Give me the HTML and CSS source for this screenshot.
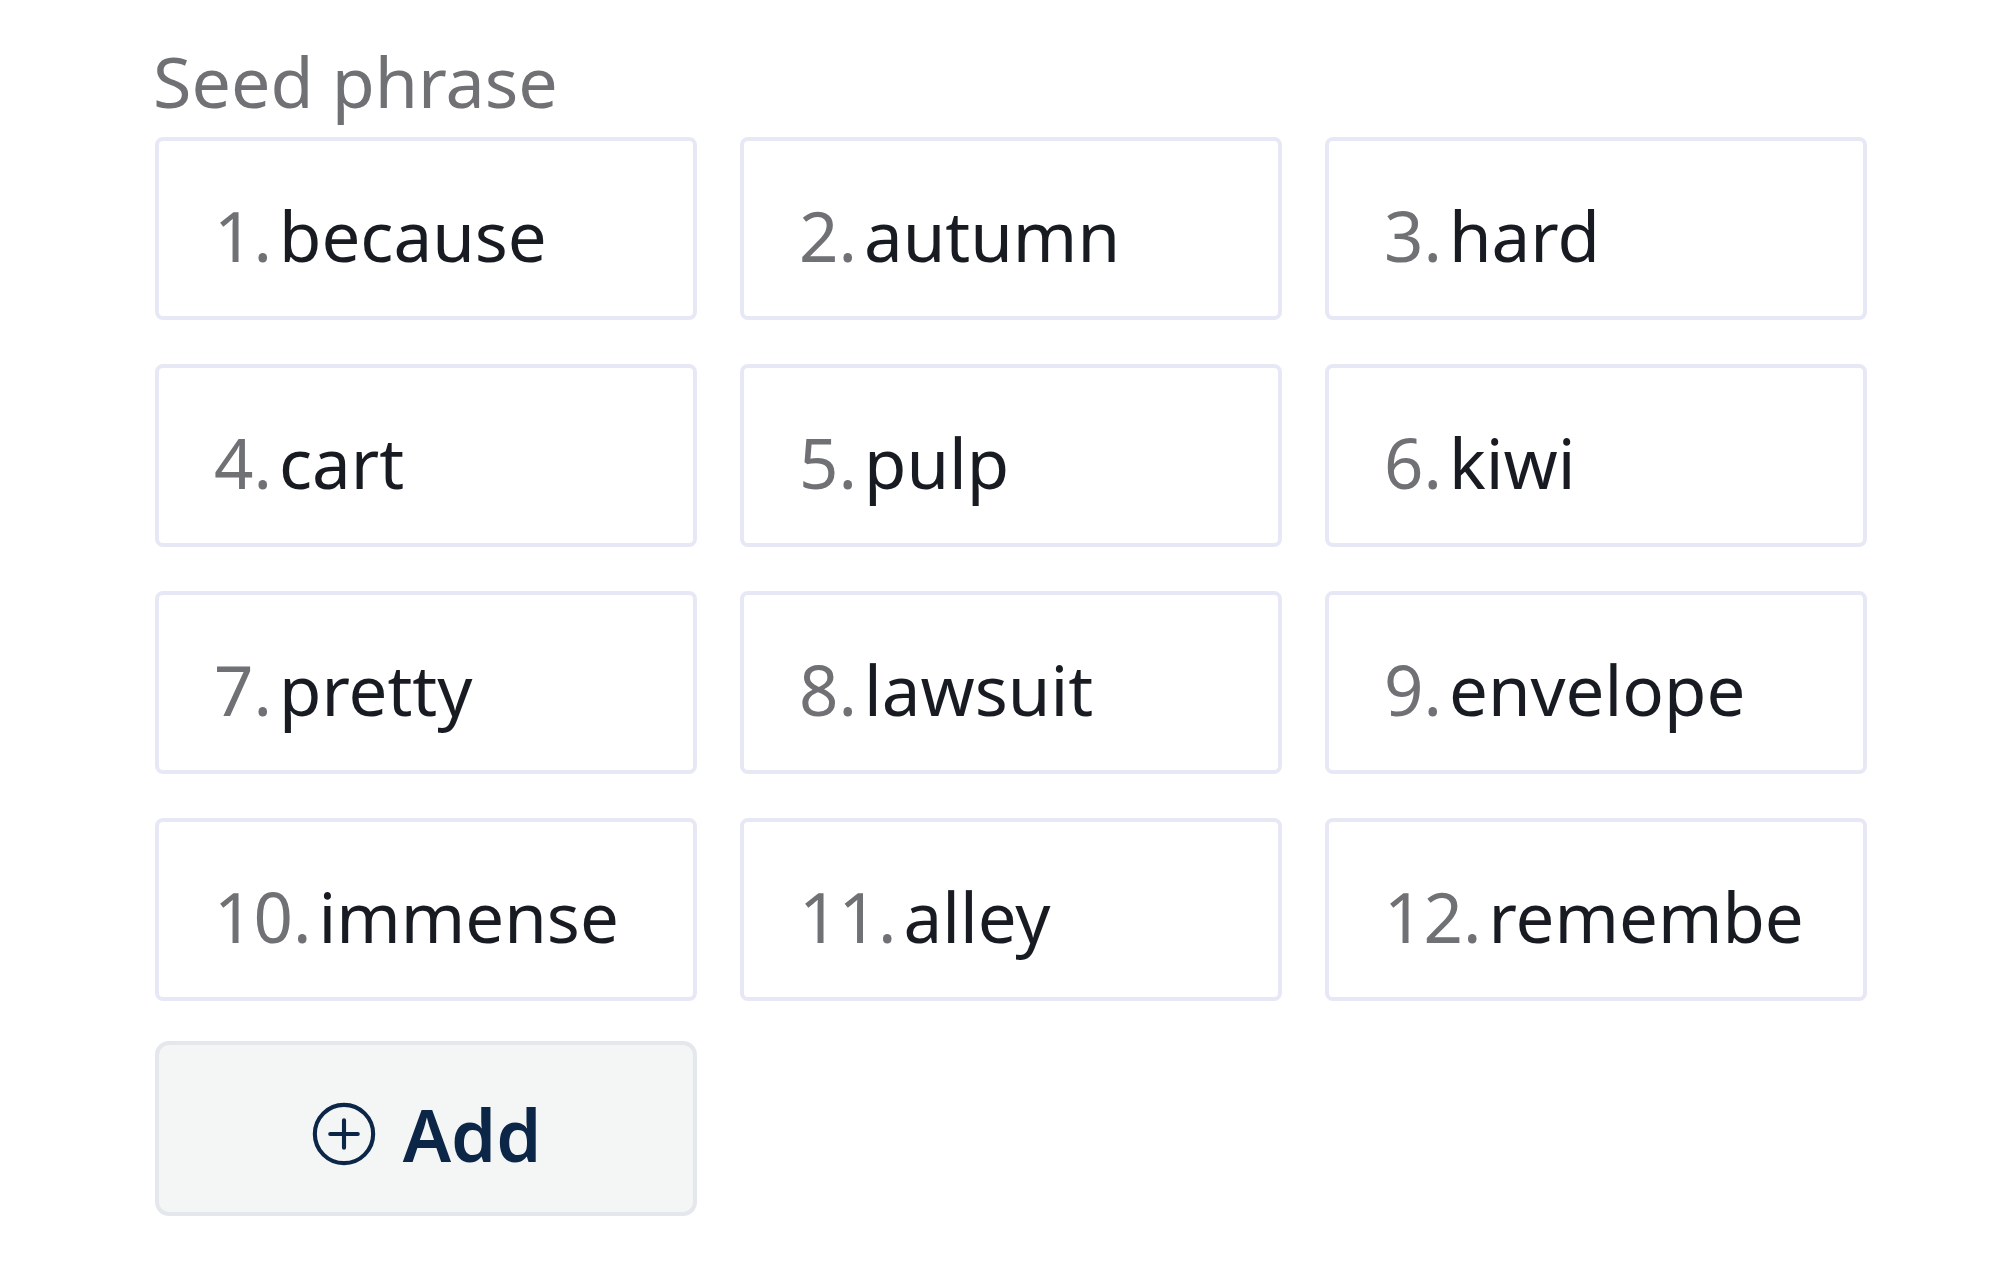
FILE: index.html
```html
<!DOCTYPE html>
<html lang="en">
<head>
<meta charset="utf-8">
<title>Seed phrase</title>
<link rel="stylesheet" href="styles.css">
</head>
<body>
<main class="seed">
  <div class="label">Seed phrase</div>
  <div class="grid">
    <div class="word"><span class="num">1.</span><span class="txt">because</span></div>
    <div class="word"><span class="num">2.</span><span class="txt">autumn</span></div>
    <div class="word"><span class="num">3.</span><span class="txt">hard</span></div>
    <div class="word"><span class="num">4.</span><span class="txt">cart</span></div>
    <div class="word"><span class="num">5.</span><span class="txt">pulp</span></div>
    <div class="word"><span class="num">6.</span><span class="txt">kiwi</span></div>
    <div class="word"><span class="num">7.</span><span class="txt">pretty</span></div>
    <div class="word"><span class="num">8.</span><span class="txt">lawsuit</span></div>
    <div class="word"><span class="num">9.</span><span class="txt">envelope</span></div>
    <div class="word"><span class="num">10.</span><span class="txt">immense</span></div>
    <div class="word"><span class="num">11.</span><span class="txt">alley</span></div>
    <div class="word"><span class="num">12.</span><span class="txt">remembe</span></div>
  </div>
  <button class="add" type="button">
    <svg class="add-icon" viewBox="0 0 24 24" width="66" height="66" aria-hidden="true">
      <circle cx="12" cy="12" r="10.6" fill="none" stroke="currentColor" stroke-width="1.5"/>
      <path d="M12 7v10M7 12h10" fill="none" stroke="currentColor" stroke-width="1.5" stroke-linecap="round"/>
    </svg>
    <span class="add-text">Add</span>
  </button>
</main>
</body>
</html>
```
FILE: styles.css
```css
html, body {
  margin: 0;
  padding: 0;
  background: #ffffff;
}

.seed {
  font-family: "Noto Sans", "Open Sans", sans-serif;
  padding: 46px 0 0 155px;
}

.label {
  font-size: 70px;
  line-height: 70px;
  color: #707174;
  margin: 0 0 21px -2px;
}

.grid {
  display: grid;
  grid-template-columns: repeat(3, 542px);
  column-gap: 43px;
  row-gap: 44px;
}

.word {
  box-sizing: border-box;
  height: 183px;
  border: 4px solid #e7e8f5;
  border-radius: 8px;
  background: #ffffff;
  display: flex;
  align-items: center;
  padding: 12px 0 0 55px;
  font-size: 69px;
  white-space: nowrap;
  overflow: hidden;
}

.num {
  color: #707175;
  margin-right: 7px;
}

.txt {
  color: #181b21;
}

.add {
  box-sizing: border-box;
  margin-top: 40px;
  width: 542px;
  height: 175px;
  border: 4px solid #e4e7ec;
  border-radius: 14px;
  background: #f4f6f6;
  display: flex;
  align-items: center;
  justify-content: center;
  gap: 26px;
  padding: 10px 0 0 0;
  color: #0c2647;
  font-family: "Noto Sans", "Open Sans", sans-serif;
  cursor: pointer;
}

.add-icon {
  display: block;
  flex: none;
}

.add-text {
  font-size: 72px;
  font-weight: 600;
  line-height: 1;
}
```
